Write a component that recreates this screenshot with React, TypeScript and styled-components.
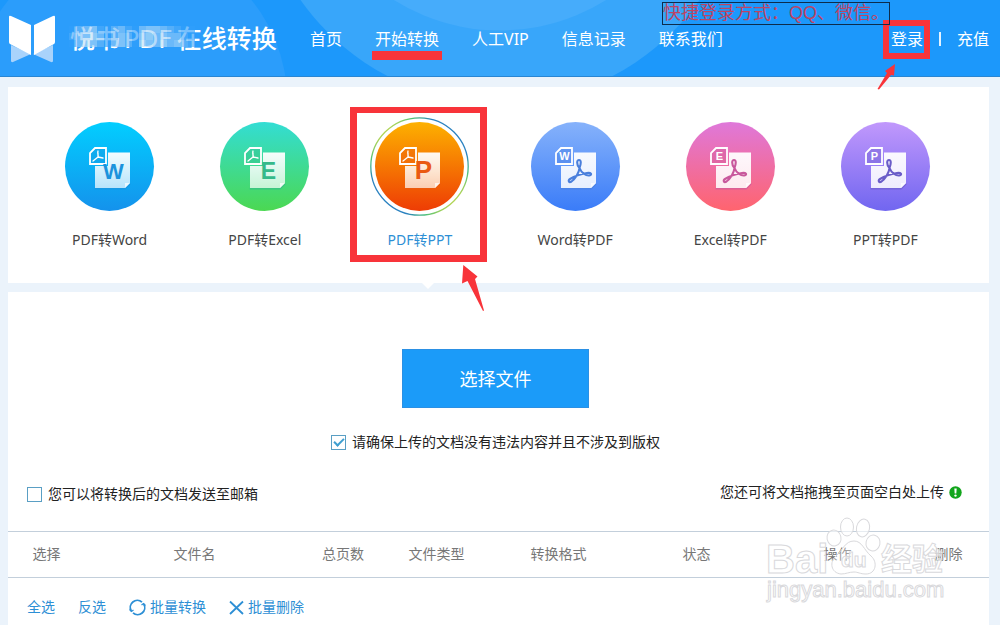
import React from 'react';
import styled, { createGlobalStyle } from 'styled-components';

const GlobalStyle = createGlobalStyle`
  *, *::before, *::after { box-sizing: border-box; }
  body {
    margin: 0;
    background: #ebf3fb;
    font-family: "Noto Sans", "Noto Sans CJK SC", sans-serif;
    font-size: 14px;
    line-height: 20px;
    color: #222;
  }
  button { font-family: inherit; }
`;

const RED = '#f8343a';
const LINK = '#2d8fd5';

const Page = styled.div`
  position: relative;
  overflow: hidden;
  min-height: 100vh;
  display: flex;
  flex-direction: column;
`;

/* ---------- header ---------- */

const Header = styled.header`
  position: relative;
  display: flex;
  align-items: center;
  height: 77px;
  padding: 2px 11px 0 8px;
  background: #1c98fb;
  border-bottom: 1px solid #2a86d2;
`;

const HeaderArt = styled.svg`
  position: absolute;
  inset: 0;
  width: 100%;
  height: 100%;
`;

const Brand = styled.a`
  position: relative;
  display: flex;
  align-items: center;
  gap: 14px;
  color: #fff;
  text-decoration: none;
`;

const BrandName = styled.span`
  position: relative;
  width: 206px;
  white-space: nowrap;
  font-size: 25px;
  line-height: 36px;
  font-weight: 500;
`;

const BrandLatin = styled.span`
  padding: 0 4px;
  font-family: "DejaVu Sans", sans-serif;
`;

const Mosaic = styled.svg`
  position: absolute;
  left: -1px;
  top: 6px;
`;

const Nav = styled.nav`
  position: relative;
  display: flex;
  gap: 33px;
  margin-left: 34px;
`;

const NavLink = styled.a<{ $marked?: boolean }>`
  position: relative;
  color: #fff;
  font-size: 16px;
  line-height: 24px;
  white-space: nowrap;
  text-decoration: none;
  ${(p) =>
    p.$marked &&
    `&::after {
      content: '';
      position: absolute;
      left: -3px;
      right: -3px;
      bottom: -9px;
      height: 9px;
      background: ${RED};
    }`}
`;

const Account = styled.div`
  position: relative;
  display: flex;
  align-items: center;
  gap: 16px;
  margin-left: auto;
`;

const Divider = styled.span`
  width: 2px;
  height: 14px;
  background: #e4f3ff;
`;

const LoginFrame = styled.span`
  position: absolute;
  left: -8px;
  top: -7px;
  width: 47px;
  height: 39px;
  border: 6px solid ${RED};
`;

const LoginNote = styled.div`
  position: absolute;
  right: 110px;
  top: 2px;
  height: 23px;
  border: 1px solid #0d2c4c;
  color: #bd4464;
  font-family: "Liberation Sans", "Noto Sans CJK SC", sans-serif;
  font-size: 18px;
  line-height: 20px;
  white-space: nowrap;
`;

const LoginArrow = styled.svg`
  position: absolute;
  right: 100px;
  top: 62px;
`;

/* ---------- converter tabs ---------- */

const Main = styled.main`
  flex: 1;
  display: flex;
  flex-direction: column;
  gap: 9px;
  padding: 10px 11px 0 8px;
`;

const Types = styled.section`
  display: flex;
  height: 196px;
  padding: 35px 26px 0 24px;
  background: #fff;
`;

const TypeTab = styled.button<{ $active?: boolean }>`
  position: relative;
  flex: 1;
  display: flex;
  flex-direction: column;
  align-items: center;
  gap: 18px;
  height: 120px;
  padding: 0;
  border: 0;
  background: none;
  color: ${(p) => (p.$active ? LINK : '#444')};
  font-size: 14px;
  line-height: 22px;
`;

const TypeIcon = styled.svg`
  overflow: visible;
  flex: none;
`;

const TabFrame = styled.span`
  position: absolute;
  left: 50%;
  top: -15px;
  width: 137px;
  height: 155px;
  margin-left: -70px;
  border: 7px solid ${RED};
  border-top-width: 6px;
`;

const TabArrow = styled.svg`
  position: absolute;
  left: 50%;
  top: 142px;
  margin-left: 41px;
`;

const Notch = styled.span`
  position: absolute;
  left: 50%;
  top: 161px;
  margin-left: 2px;
  border: 6px solid transparent;
  border-top-color: #fff;
  border-bottom: 0;
`;

/* ---------- upload panel ---------- */

const Upload = styled.section`
  flex: 1;
  background: #fff;
  padding-top: 57px;
`;

const Choose = styled.div`
  display: flex;
  flex-direction: column;
  align-items: center;
  gap: 24px;
  padding-right: 6px;
`;

const ChooseButton = styled.button`
  width: 187px;
  height: 59px;
  border: 1px solid #2b90e4;
  background: #1b9bf9;
  color: #fff;
  font-size: 18px;
  line-height: 24px;
`;

const CheckLabel = styled.label`
  display: flex;
  align-items: center;
  gap: 6px;
`;

const CheckBox = styled.input`
  appearance: none;
  width: 15px;
  height: 15px;
  margin: 0;
  border: 1px solid #5a9fc4;
  background: #fff;
  &:checked::before {
    content: '';
    display: block;
    width: 10px;
    height: 6px;
    margin: 2px 0 0 2px;
    border: solid #3f9fd0;
    border-width: 0 0 2px 2px;
    transform: rotate(-45deg);
  }
`;

const Hints = styled.div`
  display: flex;
  justify-content: space-between;
  padding: 32px 27px 27px 19px;
`;

const DragHint = styled.span`
  display: flex;
  align-items: center;
  gap: 5px;
  margin-top: -4px;
`;

const Table = styled.table`
  width: 100%;
  table-layout: fixed;
  border-collapse: collapse;
  border-top: 1px solid #c3cfdb;
  border-bottom: 1px solid #c3cfdb;
`;

const Col = styled.col<{ $width: number }>`
  width: ${(p) => p.$width}px;
`;

const Th = styled.th`
  height: 46px;
  padding: 0 0 2px;
  font-weight: 400;
  text-align: center;
  color: #777;
`;

const Actions = styled.div`
  display: flex;
  align-items: center;
  gap: 23px;
  padding: 19px 19px 8px;
`;

const Action = styled.a`
  display: flex;
  align-items: center;
  gap: 4px;
  color: ${LINK};
  text-decoration: none;
`;

const Watermark = styled.svg`
  position: absolute;
  right: 50px;
  top: 514px;
  pointer-events: none;
`;

/* ---------- drawings ---------- */

const BookLogo = () => (
  <svg width="48" height="48" viewBox="0 0 48 48" aria-hidden="true">
    <path d="M3 30 L23 39 L5 47 Q3 47.500 3 46Z M45 30 L25 39 L43 47 Q45 47.500 45 46Z" fill="#a9d3fb" />
    <path d="M1 2 Q1 0 3 1 L23 10 V40 L2 29 Q1 28.500 1 27Z M47 2 Q47 0 45 1 L26 10 V40 L46 29 Q47 28.500 47 27Z" fill="#fff" />
  </svg>
);

const MOSAIC_ROWS = [
  '023410231034432100',
  '134530242045343310',
  '035420342054353421',
].map((r) => r.split('').map(Number));
const MOSAIC_TONES = ['#2f9efb', '#4dabf9', '#6bb9f8', '#8dc8f7', '#a9d6f8', '#c0e2f5'];

const NameMosaic = () => (
  <Mosaic width="126" height="21" aria-hidden="true">
    {MOSAIC_ROWS.map((row, y) =>
      row.map((tone, x) => (
        <rect key={`${x}-${y}`} x={x * 7} y={y * 7} width="7" height="7" fill={MOSAIC_TONES[tone]} opacity={0.65} />
      )),
    )}
  </Mosaic>
);

const ACROBAT =
  'M48.500 46 C45 42 46 38 48 38 C50.500 38 50 42 48.500 46 C48 51 44 57 40.500 59.500 C38 61 36.500 58.500 39 57 C43 54.500 50 52 56 51 C60.500 50.500 61 52.500 59 53.300 C55 54.500 50 50 48.500 46Z';
const MINI_ACROBAT = 'M33 29 C32 32 34 34 33 35 L28 39 M33 35 L38 36 M33 35 V31';

type Kind = {
  id: string;
  label: string;
  from: string;
  to: string;
  ink: string;
  letter: string;
  size?: number;
  toPdf?: boolean;
  active?: boolean;
};

const KINDS: Kind[] = [
  { id: 'pw', label: 'PDF转Word', from: '#02ceff', to: '#1492ec', ink: '#1b93dc', letter: 'W', size: 22 },
  { id: 'pe', label: 'PDF转Excel', from: '#33ddd4', to: '#4bd852', ink: '#35b98a', letter: 'E', size: 23 },
  { id: 'pp', label: 'PDF转PPT', from: '#fdb100', to: '#ee3c05', ink: '#ea5a12', letter: 'P', size: 26, active: true },
  { id: 'wp', label: 'Word转PDF', from: '#86b2fb', to: '#3a7cf8', ink: '#4a7fdc', letter: 'W', toPdf: true },
  { id: 'ep', label: 'Excel转PDF', from: '#df78da', to: '#ff646e', ink: '#c8589c', letter: 'E', toPdf: true },
  { id: 'tp', label: 'PPT转PDF', from: '#c198fc', to: '#7166f0', ink: '#6a5cc8', letter: 'P', toPdf: true },
];

const KindIcon = ({ kind }: { kind: Kind }) => (
  <TypeIcon width="89" height="89" viewBox="0 0 89 89" aria-hidden="true">
    <defs>
      <linearGradient id={kind.id} x1="0" y1="0" x2="0" y2="1">
        <stop offset="0" stopColor={kind.from} />
        <stop offset="1" stopColor={kind.to} />
      </linearGradient>
      <linearGradient id={`${kind.id}-sheet`} x1="0" y1="0" x2="0" y2="1">
        <stop offset="0" stopColor="#fff" stopOpacity="0.95" />
        <stop offset="1" stopColor="#fff" stopOpacity={kind.toPdf ? 0.86 : 0.7} />
      </linearGradient>
      <linearGradient id={`${kind.id}-ring`} x1="0" y1="0" x2="1" y2="1">
        <stop offset="0.120" stopColor="#d6dc4a" />
        <stop offset="0.220" stopColor="#4cc07a" />
        <stop offset="0.320" stopColor="#2b82c0" />
        <stop offset="0.680" stopColor="#2b82c0" />
        <stop offset="0.780" stopColor="#4cc07a" />
        <stop offset="0.880" stopColor="#d6dc4a" />
      </linearGradient>
    </defs>
    {kind.active && (
      <circle cx="44.500" cy="44.500" r="48.700" fill="none" stroke={`url(#${kind.id}-ring)`} strokeWidth="1.300" />
    )}
    <circle cx="44.500" cy="44.500" r="44.500" fill={`url(#${kind.id})`} />
    <path d="M29.500 66 H60 L65.500 61 V62.500 L60.500 67.500 H29.500Z" fill={kind.ink} opacity="0.600" />
    <path d="M43 30.500 H65 V61 L60 66 H30 V44 H43Z" fill={`url(#${kind.id}-sheet)`} />
    <path d="M65 61 H60 V66Z" fill="#fff" opacity="0.700" />
    <path d="M30 26 H41 V42 H25 V31Z" fill={kind.ink} fillOpacity="0.350" stroke="#fff" strokeWidth="1.800" />
    {kind.toPdf ? (
      <>
        <path d={ACROBAT} fill="none" stroke={kind.ink} strokeWidth="2.100" strokeLinejoin="round" />
        <text x="33.500" y="38" textAnchor="middle" fontFamily="Liberation Sans" fontWeight="700" fontSize="11" fill="#fff">
          {kind.letter}
        </text>
      </>
    ) : (
      <>
        <path d={MINI_ACROBAT} fill="none" stroke="#fff" strokeWidth="1.300" strokeLinecap="round" />
        <text x="48.500" y="57" textAnchor="middle" fontFamily="Liberation Sans" fontWeight="700" fontSize={kind.size} fill={kind.ink}>
          {kind.letter}
        </text>
      </>
    )}
  </TypeIcon>
);

const AlertDot = () => (
  <svg width="13" height="13" viewBox="0 0 13 13" aria-hidden="true">
    <circle cx="6.500" cy="6.500" r="6.200" fill="#12a51c" />
    <path d="M5.300 2.500 H7.700 L7.300 7.500 H5.700Z" fill="#fff" />
    <circle cx="6.500" cy="9.600" r="1.200" fill="#fff" />
  </svg>
);

const CycleIcon = () => (
  <svg width="17" height="17" viewBox="0 0 17 17" fill="none" stroke={LINK} strokeWidth="1.800" aria-hidden="true">
    <path d="M2.300 12 A7 7 0 0 1 13 3.200" />
    <path d="M14.700 5 A7 7 0 0 1 4 13.800" />
    <path d="M0.500 10.500 L2.500 12.500 L4.500 11" strokeWidth="1.200" />
    <path d="M16.500 6.500 L14.500 4.500 L12.500 6" strokeWidth="1.200" />
  </svg>
);

const CrossIcon = () => (
  <svg width="15" height="15" viewBox="0 0 15 15" fill="none" stroke={LINK} strokeWidth="1.800" aria-hidden="true">
    <path d="M1 1.500 L14 14 M14 1.500 L1 14" />
  </svg>
);

const COLUMNS: [string, number][] = [
  ['选择', 77],
  ['文件名', 219],
  ['总页数', 78],
  ['文件类型', 109],
  ['转换格式', 135],
  ['状态', 141],
  ['操作', 141],
  ['删除', 81],
];

export default function App() {
  return (
    <Page>
      <GlobalStyle />
      <Header>
        <HeaderArt viewBox="0 0 1000 77" preserveAspectRatio="xMidYMid slice" aria-hidden="true">
          <circle cx="130" cy="100" r="157" fill="#2b9dfb" />
          <circle cx="500" cy="-140" r="244" fill="#38a6fa" />
          <circle cx="500" cy="-169" r="200" fill="#46acfb" />
        </HeaderArt>
        <Brand href="#">
          <BookLogo />
          <BrandName>
            悦书<BrandLatin>PDF</BrandLatin>在线转换
            <NameMosaic />
          </BrandName>
        </Brand>
        <Nav>
          <NavLink href="#">首页</NavLink>
          <NavLink href="#" $marked>
            开始转换
          </NavLink>
          <NavLink href="#">人工VIP</NavLink>
          <NavLink href="#">信息记录</NavLink>
          <NavLink href="#">联系我们</NavLink>
        </Nav>
        <Account>
          <NavLink href="#">登录</NavLink>
          <Divider />
          <NavLink href="#">充值</NavLink>
          <LoginFrame />
        </Account>
        <LoginNote>快捷登录方式：QQ、微信。</LoginNote>
        <LoginArrow width="24" height="28" viewBox="876 62 24 28" aria-hidden="true">
          <path d="M895 64 L885 71 L887 73 L877.500 89 L879 89.500 L891 75 L894 75.500Z" fill={RED} />
        </LoginArrow>
      </Header>

      <Main>
        <Types>
          {KINDS.map((k) => (
            <TypeTab key={k.id} type="button" $active={k.active}>
              <KindIcon kind={k} />
              {k.label}
              {k.active && (
                <>
                  <TabFrame />
                  <Notch />
                  <TabArrow width="24" height="48" viewBox="461 263 24 48" aria-hidden="true">
                    <path d="M463.300 264 L462 282.500 L467.500 280 L483 310 L484 309.500 L475 278 L477.500 275.500Z" fill={RED} />
                  </TabArrow>
                </>
              )}
            </TypeTab>
          ))}
        </Types>

        <Upload>
          <Choose>
            <ChooseButton type="button">选择文件</ChooseButton>
            <CheckLabel>
              <CheckBox type="checkbox" defaultChecked />
              请确保上传的文档没有违法内容并且不涉及到版权
            </CheckLabel>
          </Choose>
          <Hints>
            <CheckLabel>
              <CheckBox type="checkbox" />
              您可以将转换后的文档发送至邮箱
            </CheckLabel>
            <DragHint>
              您还可将文档拖拽至页面空白处上传
              <AlertDot />
            </DragHint>
          </Hints>
          <Table>
            <colgroup>
              {COLUMNS.map(([name, width]) => (
                <Col key={name} $width={width} />
              ))}
            </colgroup>
            <thead>
              <tr>
                {COLUMNS.map(([name]) => (
                  <Th key={name} scope="col">
                    {name}
                  </Th>
                ))}
              </tr>
            </thead>
          </Table>
          <Actions>
            <Action href="#">全选</Action>
            <Action href="#">反选</Action>
            <Action href="#">
              <CycleIcon />
              批量转换
            </Action>
            <Action href="#">
              <CrossIcon />
              批量删除
            </Action>
          </Actions>
        </Upload>
      </Main>

      <Watermark width="190" height="92" viewBox="760 514 190 92" aria-hidden="true">
        <g fill="#fff" fillOpacity="0.600" stroke="#d9d9dc" strokeWidth="1">
          <text x="766" y="573" fontFamily="Liberation Sans" fontWeight="700" fontSize="40">Bai</text>
          <ellipse cx="834" cy="538" rx="7" ry="8" transform="rotate(-12 834 538)" />
          <ellipse cx="847" cy="527" rx="6.500" ry="9" />
          <ellipse cx="863" cy="528" rx="6.500" ry="9" transform="rotate(12 863 528)" />
          <ellipse cx="873" cy="543" rx="7" ry="8" transform="rotate(12 873 543)" />
          <path fillOpacity="0.300" d="M854 541 C862 541 864 550 871 556 C878 562 876 574 866 574 C860 574 858 572 854 572 C849 572 846 574 841 574 C831 573 829 562 836 556 C843 550 845 541 854 541Z" />
          <text x="841" y="567" fontFamily="Liberation Sans" fontWeight="700" fontSize="21">du</text>
          <text x="881" y="570" fontFamily="Noto Sans CJK SC" fontWeight="700" fontSize="31">经验</text>
          <text x="767" y="597" fontFamily="Liberation Sans" fontSize="22">jingyan.baidu.com</text>
        </g>
      </Watermark>
    </Page>
  );
}
